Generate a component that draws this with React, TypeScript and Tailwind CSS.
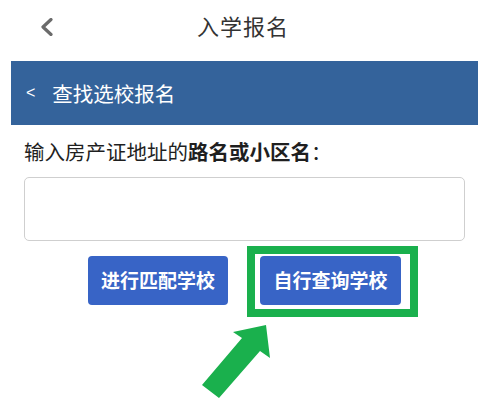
export default function App() {
    return (
        <div className="relative w-[500px] h-[410px] bg-white overflow-hidden font-['Noto_Sans_CJK_SC',sans-serif]">
            {/* Top nav */}
            <div className="h-[61px] flex items-center">
                <svg className="ml-[40px] w-[13px] h-[18px] -mt-[8px]" viewBox="0 0 13 18" fill="none">
                    <path d="M11 1.5L3 9l8 7.5" stroke="#6b6b6b" strokeWidth="3.2" strokeLinecap="round" strokeLinejoin="round" />
                </svg>
                <h1 className="ml-[144px] -mt-[10px] text-[22px] text-[#333] tracking-[1px]">入学报名</h1>
            </div>

            {/* Section header */}
            <div className="ml-[11px] w-[467px] h-[64px] bg-[#34639b] flex items-center text-white">
                <span className="ml-[15px] text-[16px] leading-none font-['Liberation_Sans',sans-serif]">&lt;</span>
                <span className="ml-[17px] text-[20.5px]">查找选校报名</span>
            </div>

            {/* Form */}
            <p className="mt-[12px] ml-[24px] text-[20.5px] leading-[28px] text-[#1f1f1f]">
                输入房产证地址的<span className="font-bold">路名或小区名</span>：
            </p>
            <input
                className="block mt-[12px] ml-[24px] w-[441px] h-[64px] rounded-[5px] border border-[#cfcfcf] outline-none"
                type="text"
            />

            <div className="flex items-start mt-[5px]">
                <button className="ml-[88px] mt-[10px] w-[140px] h-[49px] rounded-[4px] bg-[#3864c6] text-white text-[19px] font-bold">
                    进行匹配学校
                </button>
                <div className="ml-[19px] border-[8px] border-[#1ab04d] pl-[5px] pt-[2px] pr-[9px] pb-[4px]">
                    <button className="w-[141px] h-[49px] rounded-[4px] bg-[#3864c6] text-white text-[19px] font-bold">
                        自行查询学校
                    </button>
                </div>
            </div>

            {/* annotation arrow */}
            <svg className="absolute left-0 top-0 pointer-events-none" width="500" height="410" viewBox="0 0 500 410">
                <polygon points="202,385 242,338 233,332 266,325 270,358 260,351 219,398" fill="#1ab04d" />
            </svg>
        </div>
    )
}
